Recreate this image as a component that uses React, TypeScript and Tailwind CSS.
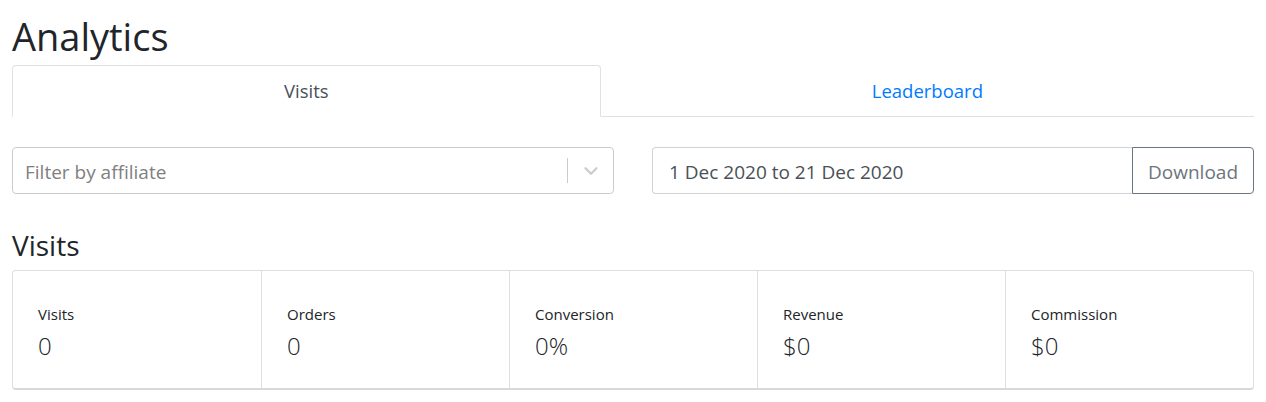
import React from 'react';
import { ChevronDown } from 'lucide-react';

const stats = [
  { label: 'Visits', value: '0' },
  { label: 'Orders', value: '0' },
  { label: 'Conversion', value: '0%' },
  { label: 'Revenue', value: '$0' },
  { label: 'Commission', value: '$0' },
];

export default function App() {
  return (
    <div className="min-h-screen bg-white px-3 text-[#212529] font-['Open_Sans',sans-serif]">
      {/* Title */}
      <h1 className="pt-[10px] text-[38px] leading-[52px] font-normal">Analytics</h1>

      {/* Tabs */}
      <div className="mt-[3px] flex border-b border-[#dee2e6]">
        <button className="-mb-px flex-auto h-[52px] rounded-t-[4px] border border-[#dee2e6] border-b-white bg-white px-4 text-[18.5px] text-[#495057]">
          Visits
        </button>
        <button className="flex-auto h-[51px] px-4 text-[18.5px] text-[#007bff]">Leaderboard</button>
      </div>

      {/* Filters */}
      <div className="mt-[30px] flex items-center">
        <div className="flex h-[47px] w-[602px] items-center rounded-[4px] border border-[#cccccc]">
          <span className="flex-1 pl-[12px] pt-[4px] text-[19px] text-[#808080]">Filter by affiliate</span>
          <span className="h-[25px] w-px bg-[#cccccc]" />
          <span className="flex w-[45px] justify-center text-[#cccccc]">
            <ChevronDown size={22} strokeWidth={2.5} />
          </span>
        </div>
        <div className="ml-[38px] flex h-[47px] flex-1">
          <div className="flex flex-1 items-center rounded-l-[4px] border border-r-0 border-[#ced4da] pl-[16px] pt-[3px] text-[19px] text-[#495057]">
            1 Dec 2020 to 21 Dec 2020
          </div>
          <button className="w-[122px] rounded-r-[4px] border border-[#6c757d] pt-[3px] text-[19px] text-[#6c757d]">
            Download
          </button>
        </div>
      </div>

      {/* Visits */}
      <h3 className="mt-[35px] text-[28px] leading-[32px] font-normal">Visits</h3>
      <div className="mt-[9px] grid grid-cols-5 rounded-[4px] border border-b-2 border-[#dfdfdf] border-b-[#d8d8d8]">
        {stats.map((s, i) => (
          <div
            key={s.label}
            className={`h-[117px] pl-[25px] pt-[33px] ${i > 0 ? 'border-l border-[#dfdfdf]' : ''}`}
          >
            <div className="text-[15px] leading-[20px]">{s.label}</div>
            <div className="mt-[6px] text-[24px] leading-[32px] font-light">{s.value}</div>
          </div>
        ))}
      </div>
    </div>
  );
}
